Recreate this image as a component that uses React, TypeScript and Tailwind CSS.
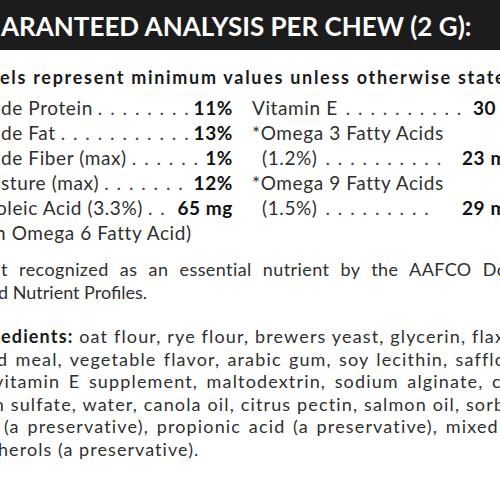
const leftRows = [
  { label: "de Protein", value: "11%", cut: "" },
  { label: "de Fat", value: "13%", cut: "" },
  { label: "de Fiber (max)", value: "1%", cut: "" },
  { label: "sture (max)", value: "12%", cut: "" },
  { label: "oleic Acid (3.3%)", value: "65 mg", cut: "-ml-[5px]" },
];

const DOTS = ". . . . . . . . . . . . . . . . . . . . . . . . . . . . . . . . . . . . . . . .";

function Row({ label, value, cut }: { label: string; value: string; cut?: string }) {
  return (
    <div className={`flex h-[25px] items-baseline whitespace-nowrap ${cut ?? ""}`}>
      <span className="shrink-0">{label}</span>
      <span className="mx-[5px] min-w-0 flex-1 overflow-hidden tracking-[1.5px] text-[#444]">{DOTS}</span>
      <span className="shrink-0 font-bold text-[#111]">{value}</span>
    </div>
  );
}

function Leader({ label, value, dots, valueWidth }: { label: string; value: string; dots: string; valueWidth: string }) {
  return (
    <div className="flex h-[25px] items-baseline whitespace-nowrap">
      <span className="shrink-0">{label}</span>
      <span className={`mx-[8px] shrink-0 overflow-hidden tracking-[1.5px] text-[#444] ${dots}`}>{DOTS}</span>
      <span className={`ml-auto shrink-0 font-bold text-[#111] ${valueWidth}`}>{value}</span>
    </div>
  );
}

export default function App() {
  return (
    <div className="h-[500px] w-[500px] overflow-hidden bg-white font-['Lato',sans-serif] text-[#2f2f2f]">
      <div className="flex h-[50px] items-center whitespace-nowrap bg-[#1c1c1c] pl-[1px] pt-[2px] text-[26px] font-bold text-white">
        ARANTEED ANALYSIS PER CHEW (2 G):
      </div>

      <div className="mt-[16px] whitespace-nowrap text-[18px] leading-[22px] font-bold tracking-[1.7px] text-[#1a1a1a]">
        els represent minimum values unless otherwise stated
      </div>

      <div className="mt-[7px] flex text-[19px] leading-[25px] tracking-[0.6px]">
        <div className="w-[233px] shrink-0 pl-[1px]">
          {leftRows.map((r) => (
            <Row key={r.label} {...r} />
          ))}
          <div className="-ml-[6px] h-[25px] whitespace-nowrap">n Omega 6 Fatty Acid)</div>
        </div>

        <div className="ml-[19px] w-[300px] shrink-0 pr-[2px]">
          <Leader label="Vitamin E" value="30 IU" dots="w-[118px]" valueWidth="w-[77px]" />
          <div className="h-[25px] whitespace-nowrap">*Omega 3 Fatty Acids</div>
          <div className="pl-[10px]">
            <Leader label="(1.2%)" value="23 mg" dots="w-[120px]" valueWidth="w-[88px]" />
          </div>
          <div className="h-[25px] whitespace-nowrap">*Omega 9 Fatty Acids</div>
          <div className="pl-[10px]">
            <Leader label="(1.5%)" value="29 mg" dots="w-[108px]" valueWidth="w-[88px]" />
          </div>
        </div>
      </div>

      <div className="mt-[13px] whitespace-nowrap text-[18px] leading-[23px] tracking-[0.4px]">
        <div className="pl-[1px] [word-spacing:6.2px]">t recognized as an essential nutrient by the AAFCO Dog</div>
        <div className="-ml-[2px] tracking-[0px]">d Nutrient Profiles.</div>
      </div>

      <div className="mt-[21px] whitespace-nowrap text-[18px] leading-[22.6px] tracking-[1.15px]">
        <div className="pl-[1px]">
          <span className="font-bold text-[#1a1a1a]">edients:</span> oat flour, rye flour, brewers yeast, glycerin, flaxseed
        </div>
        <div className="-ml-[3px] [word-spacing:1.5px]">d meal, vegetable flavor, arabic gum, soy lecithin, safflower oil,</div>
        <div className="-ml-[6px] [word-spacing:2.8px]">vitamin E supplement, maltodextrin, sodium alginate, calcium</div>
        <div className="-ml-[11px]">m sulfate, water, canola oil, citrus pectin, salmon oil, sorbic</div>
        <div className="pl-[4px] [word-spacing:2px]">(a preservative), propionic acid (a preservative), mixed</div>
        <div className="-ml-[2px] tracking-[1.05px]">herols (a preservative).</div>
      </div>
    </div>
  );
}
